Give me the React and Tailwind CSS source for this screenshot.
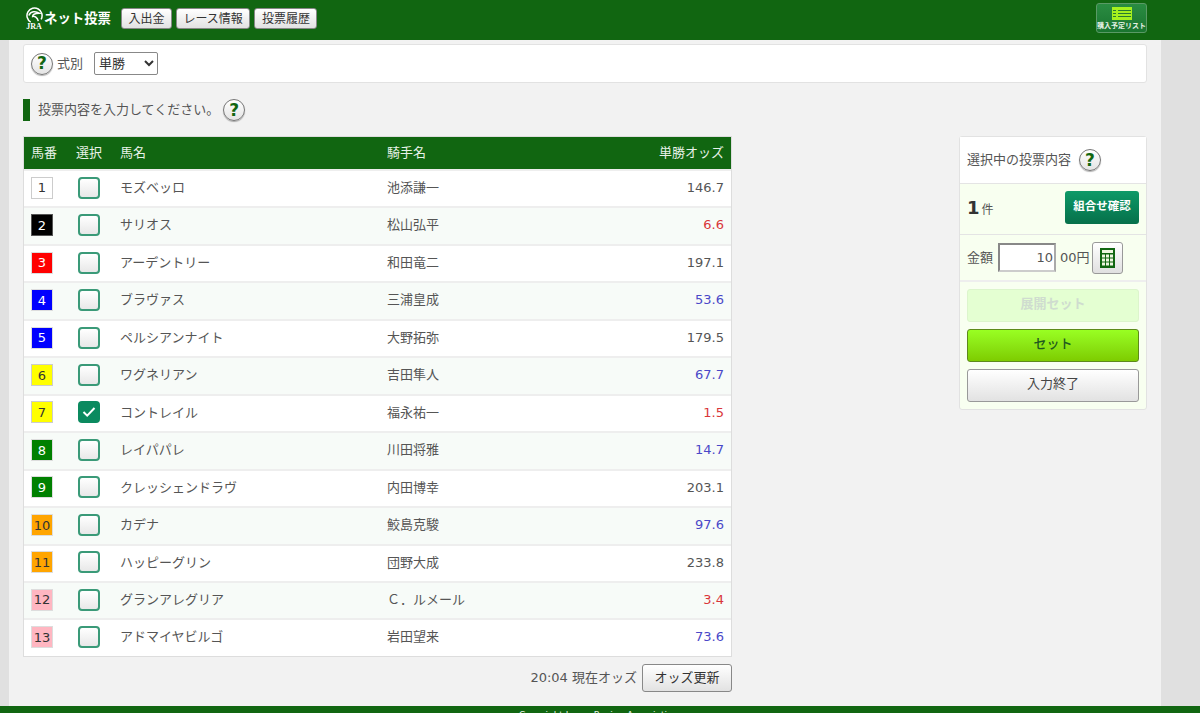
import { useState } from 'react';

const FONT = 'font-["DejaVu_Sans","Noto_Sans_CJK_JP",sans-serif]';

const horses = [
  { no: 1, name: 'モズベッロ', jockey: '池添謙一', odds: '146.7', box: 'bg-white text-[#333] border-[#ccc]', oddsColor: 'text-[#555]' },
  { no: 2, name: 'サリオス', jockey: '松山弘平', odds: '6.6', box: 'bg-black text-white border-[#555]', oddsColor: 'text-[#d9363a]' },
  { no: 3, name: 'アーデントリー', jockey: '和田竜二', odds: '197.1', box: 'bg-[#ff0000] text-white border-[#ddd]', oddsColor: 'text-[#555]' },
  { no: 4, name: 'ブラヴァス', jockey: '三浦皇成', odds: '53.6', box: 'bg-[#0000ff] text-white border-[#ddd]', oddsColor: 'text-[#4a48c8]' },
  { no: 5, name: 'ペルシアンナイト', jockey: '大野拓弥', odds: '179.5', box: 'bg-[#0000ff] text-white border-[#ddd]', oddsColor: 'text-[#555]' },
  { no: 6, name: 'ワグネリアン', jockey: '吉田隼人', odds: '67.7', box: 'bg-[#ffff00] text-[#333] border-[#ccc]', oddsColor: 'text-[#4a48c8]' },
  { no: 7, name: 'コントレイル', jockey: '福永祐一', odds: '1.5', box: 'bg-[#ffff00] text-[#333] border-[#ccc]', oddsColor: 'text-[#d9363a]', checked: true },
  { no: 8, name: 'レイパパレ', jockey: '川田将雅', odds: '14.7', box: 'bg-[#008000] text-white border-[#ddd]', oddsColor: 'text-[#4a48c8]' },
  { no: 9, name: 'クレッシェンドラヴ', jockey: '内田博幸', odds: '203.1', box: 'bg-[#008000] text-white border-[#ddd]', oddsColor: 'text-[#555]' },
  { no: 10, name: 'カデナ', jockey: '鮫島克駿', odds: '97.6', box: 'bg-[#ffa500] text-[#333] border-[#ddd]', oddsColor: 'text-[#4a48c8]' },
  { no: 11, name: 'ハッピーグリン', jockey: '団野大成', odds: '233.8', box: 'bg-[#ffa500] text-[#333] border-[#ddd]', oddsColor: 'text-[#555]' },
  { no: 12, name: 'グランアレグリア', jockey: 'Ｃ．ルメール', odds: '3.4', box: 'bg-[#ffb6c1] text-[#333] border-[#ddd]', oddsColor: 'text-[#d9363a]' },
  { no: 13, name: 'アドマイヤビルゴ', jockey: '岩田望来', odds: '73.6', box: 'bg-[#ffb6c1] text-[#333] border-[#ddd]', oddsColor: 'text-[#4a48c8]' },
];

function Help({ className = '' }) {
  return (
    <span className={`flex h-[22px] w-[22px] shrink-0 items-center justify-center rounded-full border border-[#777] bg-gradient-to-b from-white to-[#e4e4e4] text-[17px] leading-none font-bold text-[#116611] shadow-[0_1px_1px_rgba(0,0,0,0.3)] ${className}`}>
      ?
    </span>
  );
}

function NavButton({ children }) {
  return (
    <button className="h-[21px] rounded-[3px] border border-[#888] bg-gradient-to-b from-white to-[#e2e2e2] px-[6.5px] text-[12px] leading-none text-[#333]">
      {children}
    </button>
  );
}

function CheckBox({ checked, onClick }) {
  if (checked) {
    return (
      <button onClick={onClick} className="flex h-[22px] w-[22px] items-center justify-center rounded-[4px] bg-[#0b8a5f]">
        <svg width="14" height="12" viewBox="0 0 14 12" fill="none" stroke="white" strokeWidth="2">
          <path d="M1.5 6 L5.2 9.6 L12.5 2" />
        </svg>
      </button>
    );
  }
  return (
    <button onClick={onClick} className="block h-[22px] w-[22px] rounded-[4px] border-2 border-[#3a9a78] bg-gradient-to-b from-white to-[#e8e8e8]" />
  );
}

export default function App() {
  const [selected, setSelected] = useState(7);

  return (
    <div className={`flex h-[713px] flex-col overflow-hidden bg-[#e0e0e0] text-[13px] text-[#555] ${FONT}`}>
      {/* Header */}
      <header className="flex h-[40px] shrink-0 items-start justify-between bg-[#116611] pr-[53px] pl-[24px]">
        <div className="flex items-start pt-[7px]">
          <div className="mr-[10px] flex items-start text-white">
            <div className="flex w-[20px] flex-col items-center">
              <svg width="19" height="17" viewBox="0 0 20 18" fill="none" stroke="white" strokeWidth="1.6">
                <path d="M6 16 A8 8 0 1 1 17 13" />
                <path d="M4 9 C6 4.5 11 4 15 6.5 C11 6.5 8 8 8 10 C10 9.5 13 11 14 15" />
              </svg>
              <span className="-mt-[1px] font-['Liberation_Serif',serif] text-[8px] leading-[8px] font-bold">JRA</span>
            </div>
            <span className="mt-[3px] text-[13.4px] leading-[18px] font-bold">ネット投票</span>
          </div>
          <div className="mt-[1px] flex gap-[4px]">
            <NavButton>入出金</NavButton>
            <NavButton>レース情報</NavButton>
            <NavButton>投票履歴</NavButton>
          </div>
        </div>
        <button className="mt-[3px] flex h-[30px] w-[51px] flex-col items-center rounded-[3px] border border-[#5a9a66] bg-gradient-to-b from-[#2a8c42] to-[#1a7530] pt-[3px]">
          <svg width="20" height="13" viewBox="0 0 20 13">
            <rect width="20" height="13" fill="#a5f01e" />
            <path d="M1 3.5h3M6 3.5h13M1 6.5h3M6 6.5h13M1 9.5h3M6 9.5h13" stroke="#2a7a30" strokeWidth="1" />
          </svg>
          <span className="mt-[2px] text-[7px] leading-[9px] font-bold whitespace-nowrap text-[#e6f2e6]">購入予定リスト</span>
        </button>
      </header>

      {/* Main */}
      <main className="mr-[39px] ml-[9px] min-h-0 flex-1 bg-[#f2f2f2] px-[14px] pt-[4px]">
        <div className="flex h-[39px] items-center rounded-[3px] border border-[#e2e2e2] bg-white pl-[7px]">
          <Help />
          <span className="ml-[4px]">式別</span>
          <select className="ml-[11px] h-[23px] w-[64px] rounded-[2px] border border-[#888] bg-white text-[13px] text-[#333]" defaultValue="単勝">
            <option>単勝</option>
          </select>
        </div>

        <div className="mt-[15px] flex h-[24px] items-center">
          <span className="h-[22px] w-[7px] bg-[#116611]" />
          <span className="ml-[8px]">投票内容を入力してください。</span>
          <Help className="ml-[4px]" />
        </div>

        <div className="mt-[14px] flex items-start justify-between">
          {/* Horse table */}
          <div className="w-[709px]">
            <div className="border border-[#ddd]">
              <div className="flex h-[32px] items-center bg-[#116611] text-[#e8f2e8]">
                <span className="w-[52px] shrink-0 pl-[7px]">馬番</span>
                <span className="w-[44px] shrink-0">選択</span>
                <span className="w-[267px] shrink-0">馬名</span>
                <span>騎手名</span>
                <span className="mr-[7px] ml-auto">単勝オッズ</span>
              </div>
              {horses.map((h, i) => (
                <div key={h.no} className={`flex h-[37.46px] items-center border-t-2 border-[#eeeeee] pb-[2px] first:border-t-white ${i % 2 ? 'bg-[#f7fbf8]' : 'bg-white'}`}>
                  <span className="w-[54px] shrink-0 pl-[7px]">
                    <span className={`flex h-[22px] w-[22px] items-center justify-center border pt-[1px] text-[13px] ${h.box}`}>{h.no}</span>
                  </span>
                  <span className="w-[42px] shrink-0">
                    <CheckBox checked={selected === h.no} onClick={() => setSelected(h.no)} />
                  </span>
                  <span className="w-[267px] shrink-0">{h.name}</span>
                  <span>{h.jockey}</span>
                  <span className={`mr-[7px] ml-auto ${h.oddsColor}`}>{h.odds}</span>
                </div>
              ))}
            </div>
            <div className="mt-[7px] flex items-center justify-end">
              <span>20:04 現在オッズ</span>
              <button className="ml-[5px] h-[28px] w-[90px] rounded-[3px] border border-[#888] bg-gradient-to-b from-white to-[#e2e2e2] text-[13px] text-[#333]">
                オッズ更新
              </button>
            </div>
          </div>

          {/* Selection panel */}
          <aside className="w-[188px] rounded-[3px] border border-[#e2e2e2] bg-[#f8fff0]">
            <div className="flex h-[47px] items-center border-b border-[#e4e4e4] bg-white pl-[7px]">
              <span>選択中の投票内容</span>
              <Help className="ml-[8px]" />
            </div>
            <div className="flex h-[51px] items-center justify-between border-b border-[#e4e4e4] px-[7px] pb-[4px]">
              <span className="flex items-baseline"><b className="text-[18px] text-[#333]">1</b><span className="ml-[2px] text-[12px]">件</span></span>
              <button className="h-[33px] w-[74px] rounded-[3px] bg-gradient-to-b from-[#0e9a68] to-[#06704a] text-[11.5px] font-bold text-white">
                組合せ確認
              </button>
            </div>
            <div className="flex h-[47px] items-center border-b-2 border-[#eeeeee] pl-[7px]">
              <span>金額</span>
              <span className="ml-[5px] flex h-[29px] w-[58px] items-center justify-end border-2 border-[#888] border-r-[#aaa] border-b-[#ccc] bg-white pr-[1px]">10</span>
              <span className="ml-[4px]">00円</span>
              <button className="ml-[2px] flex h-[32px] w-[31px] items-center justify-center rounded-[3px] border border-[#999] bg-gradient-to-b from-white to-[#e0e0e0]">
                <svg width="15" height="20" viewBox="0 0 15 20">
                  <rect width="15" height="20" fill="#116611" />
                  <rect x="2" y="2" width="11" height="3" fill="#eef6e0" />
                  <path d="M2 6.5h3v3H2zM6 6.5h3v3H6zM10 6.5h3v3h-3zM2 10.5h3v3H2zM6 10.5h3v3H6zM10 10.5h3v3h-3zM2 14.5h3v3H2zM6 14.5h3v3H6zM10 14.5h3v3h-3z" fill="#eef6e0" />
                </svg>
              </button>
            </div>
            <div className="flex flex-col gap-[7px] p-[7px]">
              <button className="h-[33px] rounded-[3px] border border-[#dcf5cc] bg-[#e4ffd2] pb-[3px] text-[13px] font-bold text-[#cfdccf]">展開セット</button>
              <button className="h-[33px] rounded-[3px] border border-[#5d8a1a] bg-gradient-to-b from-[#99ff22] to-[#7ecc00] pb-[3px] text-[13px] font-medium text-[#1f5a1f]">セット</button>
              <button className="h-[33px] rounded-[3px] border border-[#999] bg-gradient-to-b from-white to-[#e2e2e2] pb-[3px] text-[13px] text-[#444]">入力終了</button>
            </div>
          </aside>
        </div>
      </main>

      {/* Footer */}
      <footer className="h-[7px] shrink-0 overflow-hidden bg-[#116611] pt-[2px] text-center text-[9px] leading-[14px] text-[#e8f2e8]">
        Copyright Japan Racing Association.
      </footer>
    </div>
  );
}
